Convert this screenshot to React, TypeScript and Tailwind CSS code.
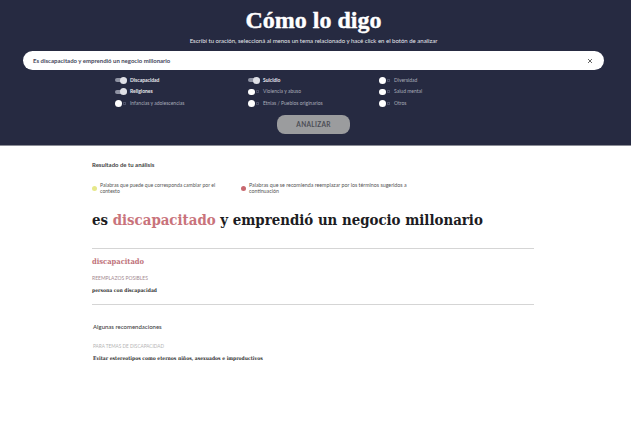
const lato = "font-['Lato',sans-serif]";
const serif = "font-['DejaVu_Serif_Condensed','DejaVu_Serif',serif]";

function Toggle({ label, on }: { label: string; on?: boolean }) {
  return (
    <div className="flex h-[11.5px] items-center">
      <span className="flex h-[8px] w-[12px] items-center">
        {on ? (
          <span className="relative block h-[4px] w-[12px] rounded-full bg-[#8f93a3]">
            <span className="absolute right-0 top-[-1.5px] h-[7px] w-[7px] rounded-full bg-[#dfe0e6]" />
          </span>
        ) : (
          <>
            <span className="block h-[6.5px] w-[6.5px] rounded-full bg-white" />
            <span className="ml-[1px] block h-[3px] w-[3px] border-[0.5px] border-[#4a4e66]" />
          </>
        )}
      </span>
      <span className={`ml-[3px] text-[5px] leading-none ${on ? "font-bold text-[#e8e9ee]" : "text-[#a9abb8]"} ${lato}`}>{label}</span>
    </div>
  );
}

export default function App() {
  return (
    <div className="h-[421px] w-[631px] overflow-hidden bg-white">
      <header className="flex h-[146px] flex-col items-center border-b border-[#8b8d96] bg-[#262a41] pr-[4px] pt-[6px]">
        <h1 className="font-['Liberation_Serif',serif] text-[24px] font-bold leading-[29px] text-white [-webkit-text-stroke:0.4px_white]">Cómo lo digo</h1>
        <p className={`mt-[2px] text-[6px] leading-[8px] text-[#e6e7ec] ${lato}`}>
          Escribí tu oración, seleccioná al menos un tema relacionado y hacé click en el botón de analizar
        </p>
        <div className="mt-[6px] flex h-[19px] w-[581px] items-center justify-between rounded-full bg-white pl-[10px] pr-[11px]">
          <span className={`text-[6px] font-bold text-[#44465a] ${lato}`}>Es discapacitado y emprendió un negocio millonario</span>
          <svg width="6" height="6" viewBox="0 0 6 6" stroke="#666" strokeWidth="1" aria-hidden="true">
            <path d="M1 1l4 4M5 1L1 5" />
          </svg>
        </div>
        <div className="ml-[115px] mt-[4.5px] grid w-[400px] grid-cols-[133px_131px_auto] self-start">
          <Toggle label="Discapacidad" on />
          <Toggle label="Suicidio" on />
          <Toggle label="Diversidad" />
          <Toggle label="Religiones" on />
          <Toggle label="Violencia y abuso" />
          <Toggle label="Salud mental" />
          <Toggle label="Infancias y adolescencias" />
          <Toggle label="Etnias / Pueblos originarios" />
          <Toggle label="Otros" />
        </div>
        <button className={`mt-[6px] h-[19px] w-[73px] rounded-[8px] bg-[#9b9c9e] text-[6.5px] font-bold tracking-[0.3px] text-[#4c4d55] ${lato}`}>
          ANALIZAR
        </button>
      </header>

      <main className="mx-[92px] w-[442px]">
        <h2 className={`mt-[14.5px] text-[6px] font-bold leading-[7px] text-[#444] ${lato}`}>Resultado de tu análisis</h2>
        <div className="mt-[14.5px] flex">
          <div className="flex w-[149px] items-center">
            <span className="h-[5px] w-[5px] shrink-0 rounded-full bg-[#e6e88a]" />
            <p className={`ml-[3px] w-[120px] text-[5.1px] leading-[6px] text-[#555] ${lato}`}>Palabras que puede que corresponda cambiar por el contexto</p>
          </div>
          <div className="flex w-[200px] items-center">
            <span className="h-[5px] w-[5px] shrink-0 rounded-full bg-[#c8686f]" />
            <p className={`ml-[3px] w-[158px] text-[5.3px] leading-[6px] text-[#555] ${lato}`}>Palabras que se recomienda reemplazar por los términos sugeridos a continuación</p>
          </div>
        </div>
        <p className={`mt-[15px] text-[14.85px] font-bold leading-[22px] text-[#1c1c22] ${serif}`}>
          es <span className="text-[#c9737b]">discapacitado</span> y emprendió un negocio millonario
        </p>
        <div className="mt-[17px] border-t border-[#d5d5d5]" />
        <h3 className={`mt-[8px] text-[7.5px] font-bold leading-[10px] text-[#c0727a] ${serif}`}>discapacitado</h3>
        <p className={`mt-[8px] text-[5px] leading-[7px] text-[#a58a92] ${lato}`}>REEMPLAZOS POSIBLES</p>
        <p className={`mt-[5px] text-[5px] font-bold leading-[7px] text-[#333] ${serif}`}>persona con discapacidad</p>
        <div className="mt-[9.5px] border-t border-[#d5d5d5]" />
        <h3 className={`ml-[1px] mt-[18px] text-[6px] font-medium leading-[8px] text-[#444] ${lato}`}>Algunas recomendaciones</h3>
        <p className={`ml-[1px] mt-[12.5px] text-[4.7px] leading-[7px] text-[#b5b5b5] ${lato}`}>PARA TEMAS DE DISCAPACIDAD</p>
        <p className={`ml-[1px] mt-[5px] text-[5px] font-bold leading-[7px] text-[#333] ${serif}`}>Evitar estereotipos como eternos niños, asexuados e improductivos</p>
      </main>
    </div>
  );
}
